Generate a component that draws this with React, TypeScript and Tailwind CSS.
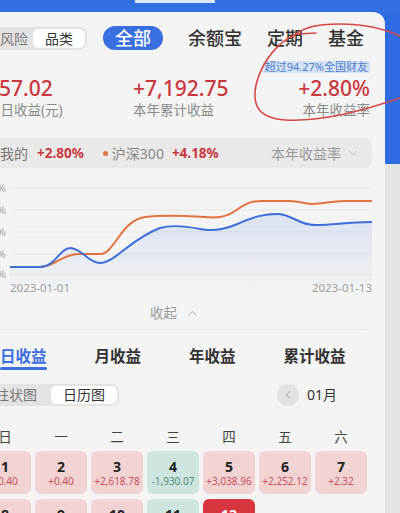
import React from 'react';
import { ChevronDown, ChevronLeft, ChevronUp } from 'lucide-react';

type Day = { day: number; value?: string; tone: 'up' | 'down' | 'today' };

const days: Day[] = [
  { day: 1, value: '+0.40', tone: 'up' },
  { day: 2, value: '+0.40', tone: 'up' },
  { day: 3, value: '+2,618.78', tone: 'up' },
  { day: 4, value: '-1,930.07', tone: 'down' },
  { day: 5, value: '+3,038.96', tone: 'up' },
  { day: 6, value: '+2,252.12', tone: 'up' },
  { day: 7, value: '+2.32', tone: 'up' },
  { day: 8, value: '+812.40', tone: 'up' },
  { day: 9, value: '+96.15', tone: 'up' },
  { day: 10, value: '+1,204.33', tone: 'up' },
  { day: 11, value: '-356.20', tone: 'down' },
  { day: 12, value: '+57.02', tone: 'today' },
];

const weekdays = ['日', '一', '二', '三', '四', '五', '六'];

const blueLine =
  'M32,94 L62,94 C77,94 82,75 92,75 C104,75 110,90 122,90 C137,90 152,66 182,55 C192,52 207,53 222,56 C232,58 242,58 257,52 C277,43 287,41 299,41 C314,41 320,52 337,52 C357,52 367,49 394,49';
const orangeLine =
  'M32,94 L62,94 C77,94 84,81 100,81 L122,81 C137,81 142,48 167,44 C182,42 212,43 227,44 C237,45 247,45 257,38 C267,31 272,28 284,28 L312,28 C322,28 325,31 334,31 C347,31 352,28 367,28 L394,28';

function YieldChart() {
  const grid = [15, 37, 59, 81, 101];
  const labels = ['4.00%', '3.00%', '2.00%', '1.00%', '0.00%'];
  return (
    <svg width="394" height="124" viewBox="0 0 394 124" className="block">
      <defs>
        <linearGradient id="blueFill" x1="0" y1="0" x2="0" y2="1">
          <stop offset="0%" stopColor="#3d6fd8" stopOpacity="0.14" />
          <stop offset="100%" stopColor="#3d6fd8" stopOpacity="0.02" />
        </linearGradient>
      </defs>
      {grid.map((y, i) => (
        <g key={y}>
          <line x1="32" x2="394" y1={y} y2={y} stroke="#e6e6e6" strokeWidth="1" />
          <text x="28" y={y + 4} textAnchor="end" fontSize="11" fill="#a5a5a5">
            {labels[i]}
          </text>
        </g>
      ))}
      <path d={`${blueLine} L394,113 L32,113 Z`} fill="url(#blueFill)" />
      <path d={orangeLine} fill="none" stroke="#e2733f" strokeWidth="2" />
      <path d={blueLine} fill="none" stroke="#3d6fd8" strokeWidth="2" />
      <text x="32" y="119" fontSize="11.5" fill="#9d9d9d">
        2023-01-01
      </text>
      <text x="394" y="119" textAnchor="end" fontSize="11.5" fill="#9d9d9d">
        2023-01-13
      </text>
    </svg>
  );
}

function DayCell({ d }: { d: Day }) {
  const bg = d.tone === 'today' ? 'bg-[#d8363f]' : d.tone === 'down' ? 'bg-[#cde5de]' : 'bg-[#f1d3d4]';
  const num = d.tone === 'today' ? 'text-white' : 'text-[#222]';
  const val = d.tone === 'today' ? 'text-white' : d.tone === 'down' ? 'text-[#4d8b75]' : 'text-[#c8505a]';
  return (
    <div className={`flex h-[43px] flex-col items-center rounded-[6px] pt-[8px] ${bg}`}>
      <span className={`text-[14px] font-bold leading-[16px] ${num}`}>{d.day}</span>
      <span className={`text-[10px] leading-[12px] ${val}`}>{d.value}</span>
    </div>
  );
}

export default function App() {
  return (
    <div className="relative flex h-[513px] w-[400px] flex-col overflow-hidden bg-[#e4e4e4] font-['Noto_Sans','Noto_Sans_CJK_SC',sans-serif]">
      {/* top blue band with tab indicator */}
      <div className="h-[12px] shrink-0 bg-[#3270e2]">
        <div className="ml-[135px] h-[3px] w-[80px] bg-[#dde7fb]" />
      </div>

      <div className="flex flex-1 bg-[linear-gradient(#2f6be3_0_152px,#e4e4e4_152px)]">
        <div className="w-[385px] shrink-0 overflow-hidden rounded-tr-[12px] bg-[#f4f4f4]">
          <div className="ml-[-22px] w-[407px]">
            {/* category nav */}
            <div className="mt-[14px] flex h-[24px] items-center pl-[8px]">
              <div className="flex h-[23px] items-center rounded-[8px] bg-[#e3e3e3] p-[2px]">
                <span className="pl-[12px] pr-[5px] text-[14px] text-[#777]">风险</span>
                <span className="flex h-[19px] items-center rounded-[6px] bg-white px-[12px] text-[14px] text-[#333]">品类</span>
              </div>
              <span className="ml-[16px] flex h-[24px] items-center rounded-full bg-[#3a6fe0] px-[12px] text-[18px] font-medium text-white">
                全部
              </span>
              <div className="ml-[25px] flex gap-[25px] text-[18px] font-medium leading-[24px] text-[#333]">
                <span>余额宝</span>
                <span>定期</span>
                <span>基金</span>
              </div>
            </div>

            {/* badge */}
            <div className="mt-[11px] flex justify-end pr-[15px]">
              <span className="bg-[#d6e3f5] px-[2px] text-[11px] leading-[12px] text-[#4f7dcc]">超过94.27%全国财友</span>
            </div>

            {/* summary numbers */}
            <div className="mt-[4px] grid grid-cols-[146px_1fr_auto] pl-[9px] pr-[15px]">
              <div>
                <div className="text-[21px] font-medium leading-[22px] text-[#c9383f]">+57.02</div>
                <div className="mt-[4px] text-[13.5px] leading-[15px] text-[#8a8a8a]">昨日收益(元)</div>
              </div>
              <div>
                <div className="text-[21px] font-medium leading-[22px] text-[#c9383f]">+7,192.75</div>
                <div className="mt-[4px] text-[13.5px] leading-[15px] text-[#8a8a8a]">本年累计收益</div>
              </div>
              <div className="text-right">
                <div className="text-[21px] font-medium leading-[22px] text-[#c9383f]">+2.80%</div>
                <div className="mt-[4px] text-[13.5px] leading-[15px] text-[#8a8a8a]">本年收益率</div>
              </div>
            </div>

            {/* legend */}
            <div className="mr-[13px] mt-[20px] flex h-[30px] items-center rounded-[8px] bg-[#e9e9e9] pl-[10px] pr-[12px] text-[14px]">
              <span className="h-[6px] w-[6px] rounded-full bg-[#3d6fd8]" />
              <span className="ml-[6px] text-[#777]">我的</span>
              <span className="ml-[9px] text-[13.5px] font-bold text-[#c9383f]">+2.80%</span>
              <span className="ml-[19px] h-[5px] w-[5px] rounded-full bg-[#e2733f]" />
              <span className="ml-[4px] text-[#888]">沪深300</span>
              <span className="ml-[8px] text-[13.5px] font-bold text-[#c9383f]">+4.18%</span>
              <span className="ml-auto text-[#999]">本年收益率</span>
              <ChevronDown className="ml-[5px] h-[14px] w-[14px] text-[#aaa]" strokeWidth={1.5} />
            </div>

            {/* chart */}
            <div className="mt-[5px]">
              <YieldChart />
            </div>

            {/* collapse */}
            <div className="mt-[8px] flex items-center justify-center pr-[13px] text-[13.5px] leading-[16px] text-[#9a9a9a]">
              <span>收起</span>
              <ChevronUp className="ml-[8px] h-[15px] w-[15px] text-[#aaa]" strokeWidth={1.5} />
            </div>

            <div className="ml-[22px] mr-[18px] mt-[8px] h-px bg-[#e6e6e6]" />

            {/* income tabs */}
            <div className="mt-[16px] flex gap-[48px] pl-[22px] text-[15.5px] font-semibold leading-[20px] text-[#333]">
              <div className="flex flex-col">
                <span className="text-[#3a6fe0]">日收益</span>
                <span className="mt-[1px] h-[2.5px] rounded-full bg-[#3a6fe0]" />
              </div>
              <span>月收益</span>
              <span>年收益</span>
              <span>累计收益</span>
            </div>

            {/* view toggle + month */}
            <div className="mt-[14px] flex items-center justify-between pl-[5px] pr-[48px]">
              <div className="flex h-[22px] items-center rounded-[7px] bg-[#e3e3e3] p-[2px]">
                <span className="pl-[10px] pr-[14px] text-[14px] text-[#777]">柱状图</span>
                <span className="flex h-[18px] items-center rounded-[5px] bg-white px-[12px] text-[14px] text-[#333]">日历图</span>
              </div>
              <div className="flex items-center">
                <span className="flex h-[22px] w-[22px] items-center justify-center rounded-full bg-[#e2e2e2]">
                  <ChevronLeft className="h-[14px] w-[14px] text-[#999]" strokeWidth={1.6} />
                </span>
                <span className="ml-[8px] text-[14px] text-[#333]">01月</span>
              </div>
            </div>

            {/* calendar */}
            <div className="mt-[23px] grid grid-cols-[repeat(7,52px)] gap-x-[4px] pl-[1px] text-[13.5px] leading-[16px] text-[#444]">
              {weekdays.map((w) => (
                <span key={w} className="text-center">
                  {w}
                </span>
              ))}
            </div>
            <div className="mt-[6px] grid grid-cols-[repeat(7,52px)] gap-x-[4px] gap-y-[5px] pl-[1px]">
              {days.map((d) => (
                <DayCell key={d.day} d={d} />
              ))}
            </div>
          </div>
        </div>
        <div className="flex-1" />
      </div>

      {/* hand-drawn annotation */}
      <svg className="pointer-events-none absolute inset-0" width="400" height="513" viewBox="0 0 400 513">
        <path
          d="M316,33 L297,34 C280,40 262,60 256,85 C252,105 258,118 285,120 C320,122 360,112 400,98"
          fill="none"
          stroke="#d64848"
          strokeWidth="1.6"
          strokeLinecap="round"
        />
        <path
          d="M293,37 C300,28 315,24 340,24 C365,24 385,29 400,36"
          fill="none"
          stroke="#d64848"
          strokeWidth="1.6"
          strokeLinecap="round"
        />
      </svg>
    </div>
  );
}
